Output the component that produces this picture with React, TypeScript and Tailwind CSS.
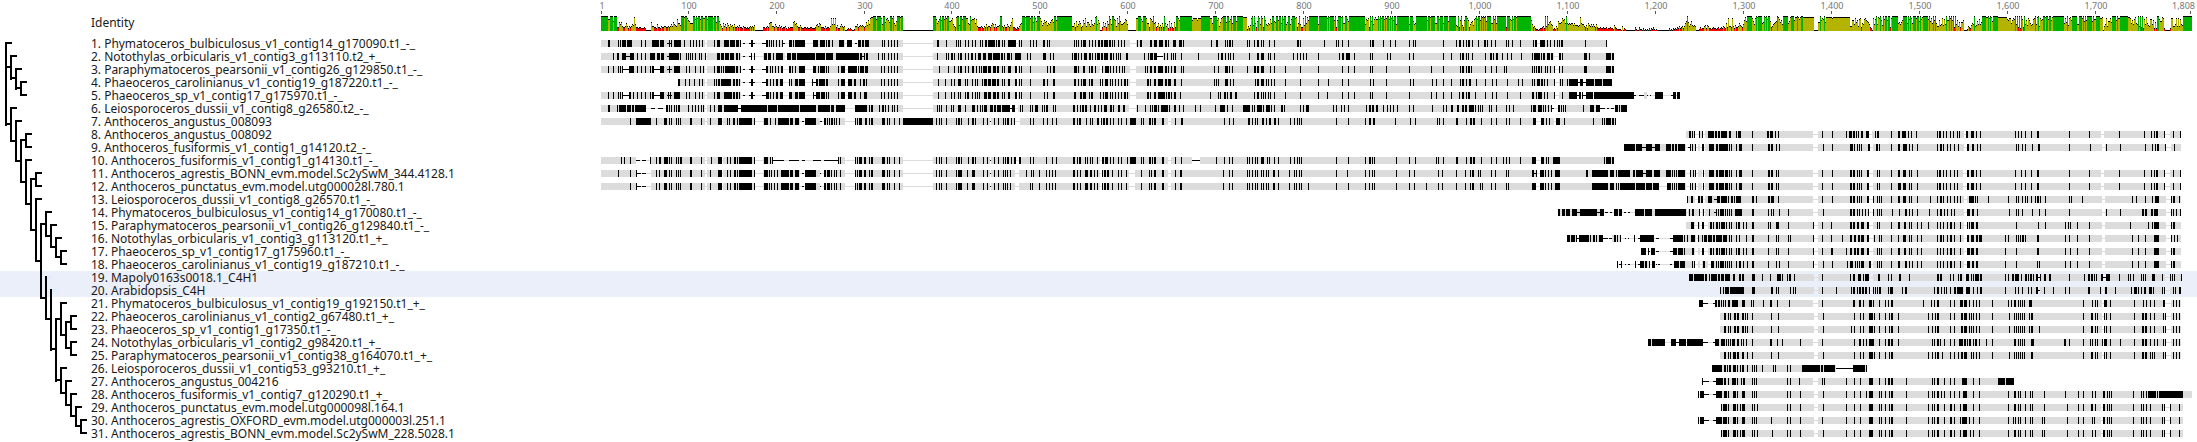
import React from "react";

// Horizontal origins of the five alignment blocks, in pixels from the chart's left edge.
const BLOCKS = [0, 330, 660, 970, 1280];
const CHART_W = 1607;

/*
 * Track notation, one block per "|":
 *   gA-B  residues that agree with the consensus (grey bar)
 *   tA-B  short inserts (thin black line)
 *   X.W   disagreeing residues from X, W pixels wide (W defaults to 1)
 */
type Row = { name: string; selected?: boolean; track: string };

const GA = "g11-115 g117-151";
const TA = "t153-155 t159-165 161.2 t172-176";
const AE = "291 294 298 301 304 307";
const GE = "g3-93 g97-231 g234-295 g300-311";
const GF = "g3-94 g97-232 g235-296 g301-311";
const GD = "g145-253 g258-309 g313-330";
const PHA = "263 294 300 303 309.4 314 319 325 329";
const TAIL = "264 272.2 275.2 280 284 293 295 303 306 309";

const rows: Row[] = [
  { name: "Phymatoceros_bulbiculosus_v1_contig14_g170090.t1_-_", track: `${GA} g176-193 g199-215 g223-255 g268-313 18.2 28 30 32.4 37.5 51 55 62.7 70.4 t77-82 79 81 84.7 94 100 103 106 109 112 124 127.3 134.5 140.5 146.3 150 ${TA} 176.2 179 181 183 186 189 192 t193-195 199.3 203 205.10 223.5 230.5 236 238.2 242 249.5 257.5 t265-267 268.3 272.2 275.4 292 294 298 301 304 307|g13-95 g98-210 g216-330 17.2 26 36 38 40 45 48 52 55 60 62 65.2 68.7 76 78.2 82 84 88.5 93.3 99 101 110 113 116 123.2 127 129 154 156 158 161 163.3 169 172 175 178.2 181.2 184.4 189.2 192 194 198 201 204 217 220.2 230.2 234.3 239.4 245.2 248 253.3 259.3 263 291 296.2 305 307 309.2 312 327 329|g0-287 g290-310 4 7.2 11 13 19 24 47.2 50 74 86 88 92 98 120 122.2 133 140 145 159 163 165 193 206 209.2 213 216 218.2 222 228 234.2 237 241 245 256 258 262 270 283 285.2 290.5 297 300 304 307 309|g0-47 1.2 25 46` },
  { name: "Notothylas_orbicularis_v1_contig3_g113110.t2_+_", track: `${GA} g173-195 g197-277 g277-313 23 27.2 32.4 t36-40 40.4 47 51 55 60.5 67.3 71.3 t77-79 79.10 90 96 98 100 102 105 109 111 115 127.3 131.3 135.4 140.4 146.2 149 t153-155 t159-162 161 164 174.3 178.3 183 186.7 197.4 202.4 207.18 226.9 236.7 242 246.23 270.2 t272-275 274 276.2 288 292 294 298 301 304 307|g13-236 g243-330 17 26 28 31.2 34 38 40.2 45 48 51.2 55 58.3 63.3 68.4 73.7 81.2 84 87.3 91 95.6 107 110 123.3 130 133 152 154.3 158 161 164.3 169.2 172 175 177.3 181.2 184.4 190.2 193 196 198 200 206.2 224 228 230.3 234.3 t236-243 244 247 251 253 255 261 278 298 301.2 305 308 310 313 329|g0-304 g309-310 7.2 11.3 18 20 24 43 47 50 53 56 68 89 92.2 96.4 104 120 122 137 140 159 163 193 201 210 212.2 216 218 222 235 240.2 243 246.2 252 257 261 271 282 284.6 291 293.2 297.3 301.2 309|g0-54 0 2 24.3 29 46.5 52.2` },
  { name: "Paraphymatoceros_pearsonii_v1_contig26_g129850.t1_-_", track: `g11-32 g39-63 g70-115 g117-151 g176-193 g199-215 g223-255 g268-313 18 23 28 30 32 t33-39 39.5 47 51 55 60 62.2 t63-70 70.4 t77-82 79 84.5 89 96 99 105 110 113 124 127.3 131 133 135.10 146.2 150 ${TA} 176.2 180 182 185 188 191.2 199.2 202 205 209.6 223.3 228 230.5 236 238 248 251.4 258.9 268 270.4 275.3 ${AE}|g13-95 g98-180 g182-210 g216-330 19 28 34 38 40.2 45 48 52.2 56 59 61 63.4 68.3 73.3 77.2 82 84 88.3 95.2 99 101 110 127 130 133.2 154.3 158 163.2 169 171.2 175 182 185.4 190 193 196 199 202 204 225 227 230.2 234.2 238.5 245.2 248 251 254.2 261 263 294 298 305.3 309 312 327|g0-304 g309-310 4.2 7.2 11.3 20 24 35 50 68 92 98 104 120 122 136 159 181 193 210 212.2 216 218.2 221 235 241 246 254 256 282 284 286 288.2 291 295 297 300 304 309|g0-54 2 24.3 46.5 52.2` },
  { name: "Phaeoceros_carolinianus_v1_contig19_g187220.t1_-_", track: `g88-115 g117-151 g176-193 g199-215 g226-255 g262-313 88.2 95 99 104 109 112 124 126 128.2 131.10 143.2 146.2 149 ${TA} 176.2 180 183 186.2 190.3 199 201 205.3 209.6 t222-226 222 226.2 229.6 236.2 248 251.4 258.4 264.2 270 273.2 276 ${AE}|g13-95 g98-180 g182-210 g216-330 18 25 31 34 38.3 45 47 52 55 57 62 64.3 68.3 72.4 77.2 82 84 88.2 95.2 99 101 110 123.2 127 133.2 154.2 158 161 163.3 169 171.2 180 182 185.3 190 192 195 198 201 204.2 207 227.2 230 234.2 238.5 245.2 248.2 250 254.2 261 294 296 298 305.3 310 313|g0-304 g309-310 5 7.2 11.3 16 18 21 24 35 50 68 78 92 98 120 123 136 160 163 182 186 193 201 210 212.2 216 219.2 226 235 242 246 257 268 272 282 284 287.3 291.2 294 297 304|g0-18 g27-52 0 2 7 9.9 t18-20 20.3 t22-26 26.8 35.7 43.9` },
  { name: "Phaeoceros_sp_v1_contig17_g175970.t1_-_", track: `g11-32 g39-63 g70-115 g117-151 g176-193 g199-215 g226-255 g262-313 18 23 28 30 32 t33-39 39.2 43 47 51 55 60 62.2 t64-70 70.4 t77-82 78 80 84.5 89 96 99 105 109 112 124 127.3 134.8 143.2 146.2 149 ${TA} 176.3 180 183 186.2 190.3 199.3 205.3 209.6 223 t224-226 226.4 231.4 236 238 248 251.4 258.4 264.2 270 274.3 ${AE}|g13-95 g98-210 g216-330 18 25 31 34 38 40 45 47.2 52 55 57 59 64.3 68.3 73.3 77.2 82 84 88.2 95.2 99 101 110 124 127 133.2 154.2 160.2 163.3 169 171.2 180 183 185.3 190 192 195 198 201 204.2 207 227.2 230 234.2 238.5 243.2 246 248.2 251 254.2 260 290 298 300 304.2 307 310.2 315.2|g0-304 g309-310 4 7.2 11 13 15 18 20 24 35 50 68 77 92 98 104 120 122 136 159 181 186 193 201 209 212.2 216 218.2 225 235 242 246 257 270 282.2 286 288.4 294 297 304|g0-17 g84-87 2 9.8 t17-19 19 20 22 t23-26 26.7 34.26 60.14 t74-76 t79-84 t87-88 t90-91 95.8 t111-113 113.3 117.3` },
  { name: "Leiosporoceros_dussii_v1_contig8_g26580.t2_-_", track: `g11-56 g76-115 g117-148 g151-255 g265-313 18.2 27 29.7 37.4 42.2 45.11 t61-65 t68-73 76.2 79 81 84 86 88.2 98 102 105 108 111 113 120 124 128.4 134.14 t148-151 151.26 178.9 188.21 210.16 228.12 241.3 246.9 265.12 279 281.2 289 292.2 295 298 302 304 307|g13-90 g98-209 g216-330 17 19 21 26 31 33 38.3 45 52.3 57 60 62 64.3 70.3 74.2 77.4 82.8 t90-92 92.3 100 102 110 112 115.3 122 124 126.2 133 135 153.2 157 160 162.2 165.2 170 174.2 178 181 184.3 190.2 193 198.2 203.2 217 225 230 232 234.3 238 241.5 246.2 249 254.2 259 263 275 280 295 300.3 303.2 307 312 323.7|g0-301 g309-310 2 4 7.5 13 16.4 21 24 31.2 34 50 53 56.3 83 86 91 94 98 116 119.2 122.2 126.2 133 137 140 143 147 159 163 182 193 196 201.2 207.2 212.2 215.2 219.5 225 228 230 232 239 241 246 256 259 263 281 283.3 288.4 293 295 298 301 t301-304 308.2|g0-40 g55-67 1 3 5 23 30.4 36.4 t40-45 t47-49 t51-54 55.3 59 61.6` },
  { name: "Anthoceros_angustus_008093", track: `g11-115 g117-132 g133-165 g173-210 g215-230 g234-255 g265-313 40 46.15 66 74.3 79 81 86 88 90 100.2 111 120 128.4 137 139 143.2 147 149.13 164 174.4 t177-178 180 185 188.11 200.3 205.4 t212-214 215.11 t230-232 234.2 237 239 241.2 244 246 249 265 267 269.3 275.2 279 281.2 292.3 297 299 304 309 313.17|g13-70 g71-95 g100-180 g181-248 g251-330 0.13 16 19 21 26 36 38.2 41 48 52.2 55 63 67 t70-71 74 78 83 85 87.2 91 94 110 113 123 127 132 136 153.2 157 159.2 166 170 172 177.2 181 183.2 186.2 190 193 198 201 206 210.6 221 223 229.2 232 234.2 242.2 255 261.2 304 309 313 328.2|g0-286 g291-304 g306-310 2 5 7 12.2 16 19.2 24.2 28 40 44 47 49 51 86 98 115 119.2 123.2 145 160 165 187 189 193 206.2 216 220.2 223.2 231 241 246 256 259 270 283.3 291.3 296 299 306.4|g0-56 4 33 42 44 46.5 52.2 55` },
  { name: "Anthoceros_angustus_008092", track: `|||g126-135 g139-143 ${GD} 129.2 132 134 139 142 148.6 155.2 158.2 161.6 169.2 176 178.3 192 207.2 210.3 215 218 262 272 286 289.3 293.2 296 298 301.2 306.3|g2-94 g97-231 g234-295 g300-311 5 7.2 21 28.2 32.4 38 41 46 67 69.2 73 76 80 83 87 89 96.2 101.3 106 110 145 148 151 155 161 167.2 199 219 249 274 281 284 286.2 294 303 310` },
  { name: "Anthoceros_fusiformis_v1_contig1_g14120.t2_-_", track: `|||g64-126 g130-136 g138-140 g142-144 ${GD} 64.11 76.6 t82-86 86.6 t92-95 95.5 106.5 112.2 115.2 118.7 t128-130 130 132 135 142.2 149.5 156.2 159.9 169 171 176 179.3 192 208.2 211.2 216 219 263 272 290.3 294 297 299 301 308.2|${GF} 6.2 9 21 28.2 33.4 39 42 47 67 70.2 73 77 80 84 88 97.2 102.2 107 110 146 148 152 155 162 168.2 199 220 236 250 275 282 285 287.2 295 304` },
  { name: "Anthoceros_fusiformis_v1_contig1_g14130.t1_-_", track: `g11-46 g60-115 g117-132 g133-165 g173-182 g248-255 g265-313 31 34 40 t46-50 t52-56 60 66 69.2 74.4 79 81 86 88 90.2 100.2 111 121 128.4 137 140 144.2 147 149.13 161 164 174.4 180 182 t182-194 t199-209 t212-215 t223-231 t234-248 248 250 265 267 269.3 274.2 279 281.2 292.3 297 299 304 309|g13-70 g71-95 g99-180 g182-248 g251-272 g280-330 16 19 21 26 36 38.2 41 48 52.2 55 63 67 t70-71 74 78 83 85 87.2 91 94.2 99.2 110 113 126 132 136 153.2 157 159.2 165 167 170 172 177 182.2 185.3 190 193 198 201 207 210.6 221 223 229.2 232 234.2 242.2 255 261 t272-280 296 304 309 312 327 329|g0-286 g291-310 2 5 7 11.3 17 19 24 28 40 44 47 49 51 86 98 115 119.2 122 124 146 159 165 186 188 193 206.2 216 220.2 223.2 231 241 246 253 256 259 270 282.4 291.3 296 298 303.7|g0-54 44 46.5 52.2` },
  { name: "Anthoceros_agrestis_BONN_evm.model.Sc2ySwM_344.4128.1", track: `g11-46 g61-115 g117-132 g133-165 g173-210 g215-230 g234-255 g265-313 28 40 46 t47-51 t52-56 66 69 74.3 79 81 86 88 90 100.2 111 120 128.4 137 140 144.2 147 149.13 164 174.4 179 181 184 187 191.8 200.3 205.4 t212-214 215.11 t230-231 234.2 237.3 241 244 246 250 265 267 269.3 274.2 279 281.2 292.3 297 299 304 309|g13-70 g71-95 g99-180 g182-209 g215-248 g251-330 16 19 21 26 36 38.4 47 52.3 63 67 t70-71 74 78 83 85 87 90 106 111 113 119 126 129 132 135 153.2 157 160 165.3 170.2 174 177 182 184.2 187.2 192 198 201 206 221 229 231 234.2 242.2 255 260.2 303 309 312 327 329|g0-286 g290-310 2 5 7 11 13 16 18 23.2 28 39 44 46 49 51 86 97 115 119 122 124 146 159 164 188 192 206 215 220 222.2 228 230 241 245 256 258 282.2 t284-287 286 290.4 295 298 301 305.5|g0-126 g130-136 g138-142 ${GD} 26.2 32.16 50.4 56 58.12 73.2 76.7 t83-86 86.6 94.6 106.5 112 114 116 118.7 130 133 135 143 149.5 156.2 159.5 165.3 169 171 176 179.3 192 208.2 211.2 216 218 262 272 290.2 293.2 297 299 301 307.2 317 319|${GE} 7 9 21 28.2 33.3 39 41 47 67 69.2 73 76 80 84 87 97.2 101.3 106 110 145 151 155 161 167.2 199 219 249 274 281 284 286.2 294 303 310` },
  { name: "Anthoceros_punctatus_evm.model.utg000028l.780.1", track: `g11-46 g61-115 g117-132 g133-165 g173-210 g215-230 g234-255 g265-313 40 46 t47-51 t52-56 66 69 74.3 79 81 86 88 90 100.2 111 120 128.4 137 140 144.2 147 149.13 164 174.4 179 181 184 187 191.8 200.3 205.4 t212-214 215.11 t230-231 234.2 237.3 241 244 246 250 265 267 269.3 274.2 279 281.2 292.3 297 299 304 309|g13-70 g71-95 g99-180 g182-209 g215-248 g251-330 16 19 21 26 36 38.4 47 52.3 63 67 t70-71 74 78 83 85 87 90 110 112 119 126 129 132 135 153.2 157 160 165.3 170.2 174 177 182 184.2 187.2 192 198 201 206 221 229 231 234.2 242.2 255 260.2 303 309 312 327 329|g0-286 g290-310 2 5 7 11 13 16 18 23.2 28 39 44 46 49 51 58 86 98 115 119 122 124 146 159 164 176 188 192 206 215 220 222.2 230 232 241 245 256 258 282.4 290.4 295 298 301 305.5|g0-99 g107-126 g130-136 g138-142 ${GD} 32.16 50.4 56 58 60.15 76.9 86.6 93.6 107.4 112 114 116 118.7 130 132 135 143 149.5 156.2 159.5 165.3 169 171 176 179.3 192 208.2 211.2 216 218 262 272 290.2 293.2 297 299 301 307.2 317 319|${GE} 7 9 21 28.3 33.3 39 41 47 67 69.2 73 76 80 84 87 97.2 101.3 106 110 145 151 155 161 167.2 199 219 249 274 281 284 286.2 294 303 310` },
  { name: "Leiosporoceros_dussii_v1_contig8_g26570.t1_-_", track: `|||g127-135 g138-143 ${GD} 127 131.2 138.2 141.2 148.4 t154-157 157.3 161.6 168 171.2 174 176.5 192.2 196 208.2 211.2 213 218 262 272 290.2 293.2 297 299 301 307.2 313 317 319 321|${GF} 3 7 9 11 21 28.2 33.3 39 41 47 60 67 70.2 73 77 80 84 87 90 99.5 105 107 118 138 146 148 152 155 157 161 165 167.2 170 175 199 201 212 262 266 275 282 285.4 301 303.2 309` },
  { name: "Phymatoceros_bulbiculosus_v1_contig14_g170080.t1_-_", track: `||308.2|g0-40 g54-62 g75-127 g128-140 g142-144 ${GD} 2.3 6.4 12.5 t17-20 20.7 25.7 32.5 t37-40 40.4 t45-48 t50-52 54.4 59.3 t64-66 t68-70 75.9 85.7 95.31 129 132.2 139 143 149 t154-156 156 158 160.4 165 167 169 171 175.7 192.2 208 211 213 219 228 263 290.2 293.2 297 299 302 305 308 313 317 319 321|${GF} 3 7 9 11 22 29 35.2 39 42 47 59 67 70.2 74 77 81 84 97.3 102.2 107 139 146 148 152 162 169 175 199 236 250 272.2 275.2 281.2 284.4 301 303 306 310` },
  { name: "Paraphymatoceros_pearsonii_v1_contig26_g129840.t1_-_", track: `|||g126-135 g138-140 g142-144 g148-254 g258-309 g313-330 131.3 138 142.2 150.2 153 156.2 159 161.4 166 169 171 176 178.2 183 186 192.2 208 210 216.3 228 253 262 271 290.2 293.2 297.2 301.3 307.2 317 319|${GF} 7 9 21 28.2 34.2 39 41 47 51 58 67 70 73 77 80.2 84 90 97 99 101.3 106.2 146 168 175 195 198 200 207 219 260 278 282 284.5 301 303.2` },
  { name: "Notothylas_orbicularis_v1_contig3_g113120.t1_+_", track: `|||g7-16 g19-43 g52-61 g113-136 g138-254 g258-309 g313-330 7.3 11.4 16 t17-19 19.9 28 30 33.2 36 39.4 t43-48 t49-52 54.2 57 60 t65-66 t68-69 74 t78-80 80.14 t96-99 t110-113 113.10 124 127 131.4 138 142 144.3 148.4 153.2 156.6 163.4 169 171 176 179 186 192.2 208 216 218 228 230 253 262 271 282 290.2 294.2 298.2 301.3 307.2 314 319|${GF} 4 9 11 21 28 33.3 39 41 47 51 67 70.2 73 77 80.2 84 90 97.2 101.3 106.2 109.3 135 138 146 148 150 152.2 155 167.2 195 199 207 219 262 268 275 284.5 301 304 307` },
  { name: "Phaeoceros_sp_v1_contig17_g175960.t1_-_", track: `|||g81-86 g113-135 g138-140 g142-144 g148-254 g258-309 g313-330 81.5 88 t88-90 91.4 t96-99 t110-113 113.4 118.5 124 132.2 142.2 150.2 153 156.2 159 161.4 166 169 171 176 178.2 183 186 192.2 208 216 218 228 253 262 271.2 286 290.2 294.2 297.2 301.3 307.2 317 319 321|${GF} 7 9 11 21 28.2 34.2 39 41 47 51 67 70 73 77 80.2 84 90 97.3 101.3 106.2 135 146 167.2 195 200 207 219 262 268 275 284.5 301 303.2` },
  { name: "Phaeoceros_carolinianus_v1_contig19_g187210.t1_-_", track: `|||g80-90 g114-135 g138-140 g142-148 g151-254 g258-309 g313-330 57 t59-62 61 t65-66 t68-70 75 t78-80 80.4 85.2 89 92.3 t96-97 t98-100 t110-112 114.5 120.5 132 134 143.2 151.3 156 158 160.4 165 167 169 171 176 179.2 183 187 192.2 208 216 219 228 253 263 272 287 290.3 295 297 299 301.3 309.2 317 319 321|${GF} 7 9 11 21 28.2 35.2 39 42 47 51 67 70 73 77 80.2 84 90 97.3 102.2 106.2 135 146 167 169 195 200 207 219 262 268 275 284.5 301 303.2` },
  { name: "Mapoly0163s0018.1_C4H1", selected: true, track: `|||g129-254 g258-309 g313-330 129.4 134.10 145.2 149 151.6 158.2 161.3 165.3 168.2 173.2 179.2 182.2 192.3 202 210 217.4 222 227 229.2 234 262 290 293.2 298.3 303 305.4 318.2 328|g3-94 g97-168 g171-232 g236-295 g300-312 8.2 18 21 29.2 39 67.2 70.2 80 83 88 90.2 96.3 101 103 105.4 110.2 135 138 142.2 145.3 148 151 155.2 158 160.2 163 166.2 t168-171 170 174.2 179.2 199 214 218.2 221.2 224 226 231.2 t233-236 236.4 249 258 260 263 271 273 275 282.3 292 300 302 304 311` },
  { name: "Arabidopsis_C4H", selected: true, track: `|||g160-254 g258-309 g313-330 160 163 165.4 170.14 192.3 211.2 216 218 230 233 235 262 276 291 293.2 297 299.2 302.2 305.2 309 313 315 317 319.2 328|g3-94 g97-168 g170-232 g234-295 g300-311 3 5 7 9.2 18 20.3 32 35.2 64 67.2 71 74 76 80 84.2 87.6 96.4 103 107 110.2 135 145 148 152 158 161 166.2 t167-170 174 183 195 199 218.2 230 235.2 245 261 264.3 268 271 274.2 279.3 283 292 294 303 305 309.2` },
  { name: "Phymatoceros_bulbiculosus_v1_contig19_g192150.t1_+_", track: `|||g155-253 g258-330 139.4 t143-148 t153-155 155.2 158.2 161 163 165 168.2 172.6 182.3 191 193 203 210.2 217 229 262 293.2 299.2 303 309.3 313 319 325 328|g0-232 g234-295 g301-311 0.2 3 9 15 18 21.2 53 61 64 67.2 80 84 90.3 94.3 99 103 106 109 122 138 141 144.2 148 150 152 154 159.3 213 222 225 227 234.3 240 264 273 276 280 284 293.2 303 306 309` },
  { name: "Phaeoceros_carolinianus_v1_contig2_g67480.t1_+_", track: `|||g160-254 g258-330 164.2 168 170 174.2 177.2 182.2 185 187 192 211 218 ${PHA}|g0-232 g234-295 g301-311 0.3 4 9 15 19 21.2 28 58 62 65 67.2 80 84 91.2 94.3 99 101 103 106 109 122 139 144 146 148 150 152 154 159 161.2 213 221.2 225 227 234 236 240 ${TAIL}` },
  { name: "Phaeoceros_sp_v1_contig1_g17350.t1_-_", track: `|||g160-254 g258-330 164.2 168 170 174.2 177.2 182.2 185 187 192 211 218 291 ${PHA}|g0-232 g234-295 g301-311 0.3 4 9 15 19 21.2 28 58 62 65 67.2 80 84 91.2 94.3 99 101 103 106 109 122 139 144 146 148 150 152 154 159 161.2 169 213 221.2 225 227 234 236 240 ${TAIL}` },
  { name: "Notothylas_orbicularis_v1_contig2_g98420.t1_+_", track: `|||g88-105 g155-253 g258-330 88.3 92.13 111.5 t116-119 119.7 127.16 t143-148 t153-155 155.4 161.4 166 168 170 172.3 177.2 181 183 186 192 210.2 217 222 240 262 294 299.2 303 306 309.5 319 325 328|g0-232 g234-295 g301-311 0.4 9 15 19 21.2 28 62 64 67.2 70 74 80 84 89.4 94.2 97 99.2 103 105.2 109 116 122 144.2 148 150 152 154 161.3 194.2 199 213 220 222 225 227 232 234.3 240 250 264 272.2 275.2 280 284 287 293 295 303 306 309` },
  { name: "Paraphymatoceros_pearsonii_v1_contig38_g164070.t1_+_", track: `|||g160-254 g258-330 164.2 168 170 173.3 177.2 182.2 187 192 211 218 ${PHA}|g0-232 g234-295 g301-311 0.3 4 9 15 19 21.2 58 62 65 67.2 72 80 84 88 91.2 94.3 101 103 106 109 122 139 144 146 148 150 152 154 161.2 213 221.2 225 227 234 236 240 264 272.2 275.2 280 282 284 293 295 303 306 309` },
  { name: "Leiosporoceros_dussii_v1_contig53_g93210.t1_+_", track: `|||g152-276 g293-307 152.10 164.2 167 169.2 173.3 177 180 182.2 187 192 194 196 202 213 215 227 230 242.18 261.2 264.11 t276-293 293.12 306` },
  { name: "Anthoceros_angustus_004216", track: `|||g156-253 g258-330 142 t143-149 t153-156 156.7 164.2 168 172.4 177 181 183.2 192 194 196 227 230 239 262 264 286 294 300 309.4 319 325 328|g0-144 0.3 9 15 19 21.2 36 62 64 67.2 74 80 84 92.5 103 109 128.7 136.8` },
  { name: "Anthoceros_fusiformis_v1_contig7_g120290.t1_+_", track: `|||g156-254 g258-330 138 140.4 t144-149 t153-156 156.6 164.3 168 173.3 177 182.3 192 194 196 227 230 240 263 286 294 300 306 309.4 319 325 329|g0-322 0.3 9 11 15 19 21.2 36 58 62 64 67.2 71 74 80 84 89 93.4 103 109 138 144.2 148 150 155 160 162 174 195 208 213 222 225 233.2 237 239 241 263 271 273 276 278.8 287 289.24` },
  { name: "Anthoceros_punctatus_evm.model.utg000098l.164.1", track: `|||g161-254 g258-330 161 163.4 168 173.3 177 180 182.3 192 194 197 227 230 240 263 286 294 300 309.4 319 321 325 329|g0-231 g233-295 g300-313 0.3 9 11 15 19 21.2 36 58 62 64 67.2 74 80.2 84 90 93.4 103 109 138 144.2 148 150 155 160 162 174 197 208 213 221.2 225 233.2 237 239 241 263 271 273 276 280 292 294 300 309` },
  { name: "Anthoceros_agrestis_OXFORD_evm.model.utg000003l.251.1", track: `|||g156-254 g258-330 138 140.4 t144-149 t153-156 156.6 163.4 168 173.3 177 182.3 192 194 196 211 227 230 240 262 286 294 300 309.4 319 321 325 329|g0-231 g233-295 g300-313 0.3 9 11 15 19 21.2 36 58 62 64 67.2 74 80.2 84 90 92.5 99 103 109 138 143 145 148 150 155 160 162 172 174 197 208 213 222 224 233.2 237 239 241 263 271 273 276 280 292 294 300 309` },
  { name: "Anthoceros_agrestis_BONN_evm.model.Sc2ySwM_228.5028.1", track: `|||g161-254 g258-330 161 163.4 168 173.3 177 180 182.3 192 194 197 212 227 230 240 263 286 294 300 309.4 319 321 325 329|g0-231 g233-295 g300-313 0.3 9 11 15 19 21.2 36 58 62 64 67.2 74 80.2 84 90 93.4 100 103 109 138 144.2 148 150 155 160 162 172 174 197 208 213 222 225 233.2 237 239 241 263 271 273 276 280 292 294 300 309` },
];

/*
 * Identity profile, one block per entry. "@X" anchors the columns that follow at X;
 * each other token is a height digit (0-f) and how many columns share it.
 * Columns between two anchors are spread evenly over the distance.
 */
const identity = [
  "@11 f7 c2 f3 a f3 @27 4 9 7 9 5 4 4 5 8 5 3 5 4 5 7 6 @44 e 7 4 4 3 4 4 3 3 3 4 3 @56 05 @61 9 5 5 4 4 3 7 4 4 3 5 4 4 5 5 4 4 5 4 5 @81 7 5 9 7 6 5 c 8 8 6 @91 f3 e f2 d b a e @100 83 @103 f2 c f d f2 c f2 c @113 d @115 f f c f5 d f2 @126 9 f2 a b 7 5 3 1 @133 8 5 7 4 8 6 4 7 5 6 4 7 4 4 5 4 6 4 4 3 5 4 4 3 4 3 4 5 4 5 4 6 @165 08 @173 4 4 3 4 5 4 8 9 9 5 5 4 7 5 4 4 6 4 5 3 4 4 5 3 2 4 3 4 @201 4 9 a 7 8 5 4 4 6 4 3 4 4 3 4 3 3 4 4 3 @223 3 4 6 7 5 8 7 4 4 3 5 3 4 4 3 5 @241 d 7 d 7 d @246 4 6 3 3 5 7 5 4 5 @255 0 2 3 2 3 2 1 1 2 @265 5 5 7 4 5 6 5 6 5 4 5 9 6 b @279 7 d @281 e @283 f3 c f4 @291 d 7 @293 f2 9 @296 c d b 9 @300 f2 d f @304 8 6 a @307 f3 e f f @313 017",
  "@0 013 @13 f3 c 8 a 9 c f b f2 e c f d f2 e @29 a b d 7 5 4 e f 6 f2 c f3 @46 d 8 7 f b c d 8 c 5 4 @59 4 4 5 4 3 5 4 7 4 5 5 4 6 8 7 @74 4 7 4 5 5 6 @80 f2 @82 5 4 6 4 4 7 5 4 6 9 d 4 4 3 2 4 3 @99 5 7 8 @102 f3 e f4 d f2 9 f d a f c @118 f2 d a 6 8 b 9 a 6 d @128 8 7 9 b c 9 @134 f2 b f15 @152 5 8 4 a 5 7 a 8 4 5 b 8 d 5 @167 9 7 5 b 7 6 8 e @176 f 7 b 8 @180 0 1 4 9 5 8 4 a 7 f c 7 @192 f c b 5 d 8 f a @201 7 8 9 c b 7 @208 1 @216 d2 f3 c a f3 d @227 8 4 d c a f 8 9 4 5 8 4 6 @241 4 8 4 f 8 5 7 3 a 4 8 4 3 9 4 @256 f2 d b f4 @264 f8 @272 b d4 b d3 @281 f9 @290 d 8 f4 b d 5 @300 9 d e @303 f3 9 f2 a c f 8 d @313 f3 a @317 f6 @323 e4 2 5 3",
  "@0 6 d f 6 f 8 4 a f d 7 f @12 d 4 f b 7 6 8 7 c 8 @22 f2 a 9 f2 b f2 8 f c e @34 f2 7 9 f2 7 c @42 f2 d e 4 8 f 7 @51 4 d 6 f 8 e b @59 f9 @68 7 @69 f8 d f @79 e @80 f4 b f @86 4 b @88 f3 e f @93 8 f2 c @98 a f16 @115 7 c b d 4 f @121 a f 7 c e @126 c f c f d f2 c f d f2 c f d f b f2 7 @147 f11 @159 7 f3 @163 a 7 8 @166 f10 b f2 @180 e f4 @185 8 f2 c f3 @193 8 f4 a f7 @206 6 5 f 4 b f 6 @213 4 b f 8 f d b f @219 4 7 9 a 6 c @225 d f c f2 @230 b f e f @234 e f a f5 @241 8 f c f @246 8 f9 @256 4 f3 @260 c b f2 c f3 e f2 @268 f13 @281 b @282 7 4 5 3 2 2 1 @289 2 @290 3 4 5 3 @295 f 5 f @298 7 9 a 7 6 @303 2 3 2 5 3 @308 a 8",
  "@0 8 9 d b c 8 f 8 7 8 7 8 8 6 8 @15 6 6 6 5 6 e 8 7 7 5 4 6 3 8 6 5 7 5 7 5 4 @36 7 4 3 3 4 3 3 4 3 3 4 2 3 3 4 3 3 2 6 4 3 2 @58 2 2 1 5 1 3 2 1 1 1 0 1 0 0 @74 1 4 2 1 1 4 2 2 1 3 1 2 1 2 1 3 1 3 2 4 2 1 2 1 1 0 @100 1 1 1 0 1 0 1 1 @109 3 1 2 1 3 2 3 2 4 3 5 3 4 5 @123 3 5 @125 8 a @127 f 9 5 7 a 6 5 6 @135 5 1 1 0 2 4 2 3 3 5 6 3 6 @148 5 3 3 2 3 4 3 3 2 3 4 2 3 4 3 5 4 @165 3 @166 8 4 @168 d 5 5 4 d 5 @174 3 6 4 4 5 8 6 5 4 @183 7 b e a @187 f e @188 f4 @192 d a 7 b @195 d f @197 e f4 @202 8 9 @204 f e f @207 c f2 a 4 @212 5 7 8 9 a @217 f e c @220 9 b 7 @223 f5 @228 8 a e @231 f3 @234 b e2 @237 f e c e @241 f e11 @254 04 @258 9 @260 f b d c f @265 9 e6 d e11 @283 e7 @290 5 @292 b 7 d 9 b 5 c d @301 4 8 7 c d @306 b a 9 7",
  "@0 4 3 1 @3 d 7 c f 7 e d @10 f b 6 f c f2 b @18 f2 4 d @22 f6 @28 8 9 7 9 b @33 f4 8 @38 f c f @41 d 8 b @43 f3 d f2 @49 a f c @52 e f5 @58 c f a @61 d 8 f b f 8 @67 5 5 b 6 7 d @73 6 c 7 f b b @79 f d @81 f b @83 f 4 @85 f 7 b @88 5 9 4 9 9 b @94 1 1 2 5 4 3 6 8 @103 7 f 5 6 @107 a 7 c 7 @111 9 @112 f4 @116 e f d f e @122 a @123 f5 @128 e9 @137 c b d d 8 @142 b d c @145 f 7 f 4 @149 f 3 f c @153 4 f 7 b @157 6 d b 8 6 7 @163 c d @165 f 7 e f 5 d @171 b c @173 f2 e f2 c @179 f b e f @184 f10 @194 8 d @196 9 f @198 6 d e b @202 f5 @207 7 f3 d @213 f a f b @217 f5 @222 a f @224 c f4 @230 d @232 e 1 5 @235 7 d 5 @238 a d 9 @242 f4 @246 b f @248 d @250 f8 @258 e @260 d 8 b 7 @264 c e @266 8 7 @268 f 5 f @271 4 f 3 c @275 7 @276 e 8 6 5 @280 c 7 b @284 3 9 3 @287 f c @290 a e @293 d 3 @295 05 @300 3 d d 5 @304 5 7 d 5 @308 d 5 c 7 3 @312 6 @313 f9",
];
const BLOCK_ENDS = [330, 330, 310, 310, 322];

const profile: number[] = identity.flatMap((part, b) => {
  const segments = part.split("@").filter((s) => s.trim());
  const starts = segments.map((s) => parseInt(s, 10));
  return segments.flatMap((s, i) => {
    const columns = s.trim().split(" ").slice(1).flatMap((tok) => Array(Number(tok.slice(1)) || 1).fill(parseInt(tok[0], 16)) as number[]);
    const width = (i + 1 < starts.length ? starts[i + 1] : BLOCK_ENDS[b]) - starts[i];
    return Array.from({ length: width }, (_, k) => columns[Math.floor((k * columns.length) / width)]);
  });
});

const rulerMarks = [100, 200, 300, 400, 500, 600, 700, 800, 900, 1000, 1100, 1200, 1300, 1400, 1500, 1600, 1700];

// Guide tree: [depth, top, bottom] of each vertical branch.
const branches: [number, number, number][] = [
  [0, 43, 125], [1, 56, 79], [2, 69, 89], [3, 82, 95], [1, 108, 141], [2, 121, 161], [3, 140, 182],
  [4, 134, 147], [4, 160, 204], [5, 179, 230], [6, 173, 186], [6, 199, 261], [7, 224, 298], [8, 212, 236],
  [9, 225, 247], [10, 238, 257], [11, 251, 264], [8, 277, 319], [9, 290, 350], [10, 319, 381], [11, 303, 335],
  [12, 322, 348], [13, 316, 329], [13, 342, 355], [11, 368, 393], [12, 381, 405], [13, 394, 416], [14, 407, 426], [15, 420, 433],
];
const joins: [number, number][] = [
  [0, 67], [1, 78], [2, 88], [0, 124], [1, 141], [2, 161], [3, 140], [3, 182], [4, 204], [5, 179], [5, 230],
  [6, 261], [7, 224], [8, 236], [9, 247], [10, 257], [7, 298], [8, 319], [9, 349], [10, 319], [11, 335],
  [12, 322], [12, 348], [10, 380], [11, 393], [12, 405], [13, 416], [14, 426],
];
const leafDepth = [0, 1, 2, 3, 3, 1, 2, 4, 4, 4, 6, 6, 6, 8, 9, 10, 11, 11, 8, 9, 11, 13, 13, 13, 13, 11, 12, 13, 14, 15, 15];

function Track({ track }: { track: string }) {
  const grey: [number, number][] = [];
  const thin: [number, number][] = [];
  const black: [number, number][] = [];
  track.split("|").forEach((part, b) => {
    part.split(" ").filter(Boolean).forEach((tok) => {
      if (tok[0] === "g" || tok[0] === "t") {
        const [s, e] = tok.slice(1).split("-").map(Number);
        (tok[0] === "g" ? grey : thin).push([BLOCKS[b] + s, e - s]);
      } else {
        const [x, w] = tok.split(".");
        black.push([BLOCKS[b] + Number(x), w === undefined ? 1 : Number(w)]);
      }
    });
  });
  const all = [...grey, ...thin, ...black];
  const from = Math.min(...all.map((s) => s[0]));
  const to = Math.max(...all.map((s) => s[0] + s[1]));
  const box = (list: [number, number][], y: number, h: number) => list.map(([x, w]) => `M${x} ${y}h${w}v${h}h${-w}z`).join("");
  return (
    <svg width={CHART_W} height={13} shapeRendering="crispEdges" className="block shrink-0">
      <path d={box([[from, to - from]], 6, 1)} fill="#dcdcdc" />
      <path d={box(grey, 3, 7)} fill="#dcdcdc" />
      <path d={box(thin, 6, 1)} fill="#000" />
      <path d={box(black, 3, 7)} fill="#000" />
    </svg>
  );
}

function IdentityGraph() {
  const paths = { green: "", olive: "", red: "", cap: "" };
  profile.forEach((h, i) => {
    const x = 11 + i;
    const key = h === 15 ? "green" : h > 4 ? "olive" : "red";
    if (h > 0) paths[key] += `M${x} ${15 - h}h1v${h}h-1z`;
    paths.cap += `M${x} ${h === 0 ? 14 : 15 - h}h1v1h-1z`;
  });
  return (
    <svg width={CHART_W} height={15} shapeRendering="crispEdges" className="block">
      <path d={paths.green} fill="#00b400" />
      <path d={paths.olive} fill="#b4b400" />
      <path d={paths.red} fill="#ff0000" />
      <path d={paths.cap} fill="#000" />
    </svg>
  );
}

function Ruler() {
  const at = (n: number) => Math.floor(11 + 0.8796 * (n - 1)) + 0.5;
  return (
    <svg width={CHART_W} height={16} className="block font-['Noto_Sans',sans-serif] text-[9px]" fill="#777">
      {[1, ...rulerMarks, 1808].map((n) => (
        <g key={n}>
          <rect x={at(n) - 0.5} y={11} width={1} height={3} fill="#555" />
          <text x={n === 1808 ? at(n) - 7 : at(n) + 0.5} y={8.6} textAnchor="middle">{n.toLocaleString("en-US")}</text>
        </g>
      ))}
    </svg>
  );
}

function GuideTree() {
  const d =
    branches.map(([c, a, b]) => `M${6 + 5 * c} ${a - 1}V${b + 1}`).join("") +
    joins.map(([c, y]) => `M${5 + 5 * c} ${y}h6`).join("");
  const leaf = (i: number) => `M${5 + 5 * leafDepth[i]} ${43 + 13 * i}h7`;
  return (
    <svg width={91} height={403} viewBox="0 37 91 403" shapeRendering="crispEdges" className="col-start-1 row-start-1 block" strokeWidth={2}>
      <path d={[18, 19].map(leaf).join("")} stroke="#e0eaff" />
      <path d={d + rows.map((r, i) => (r.selected ? "" : leaf(i))).join("")} stroke="#000" />
    </svg>
  );
}

export default function App() {
  return (
    <div className="h-[442px] w-[2197px] overflow-hidden bg-white font-['Noto_Sans',sans-serif] text-[12px] tracking-[-0.025px] text-[#1a1a1a]">
      <header className="flex h-[37px]">
        <div className="w-[590px] pt-[16px] pl-[91px] leading-[14px]">Identity</div>
        <div className="flex flex-col">
          <Ruler />
          <IdentityGraph />
        </div>
      </header>
      <main className="grid grid-cols-1">
        <ol className="col-start-1 row-start-1">
          {rows.map((r, i) => (
            <li key={i} className={`flex h-[13px] ${r.selected ? "bg-[#eaeff9]" : ""}`}>
              <span className="w-[590px] shrink-0 pl-[91px] leading-[14px] whitespace-nowrap">
                {i + 1}. {r.name}
              </span>
              <Track track={r.track} />
            </li>
          ))}
        </ol>
        <GuideTree />
      </main>
    </div>
  );
}
